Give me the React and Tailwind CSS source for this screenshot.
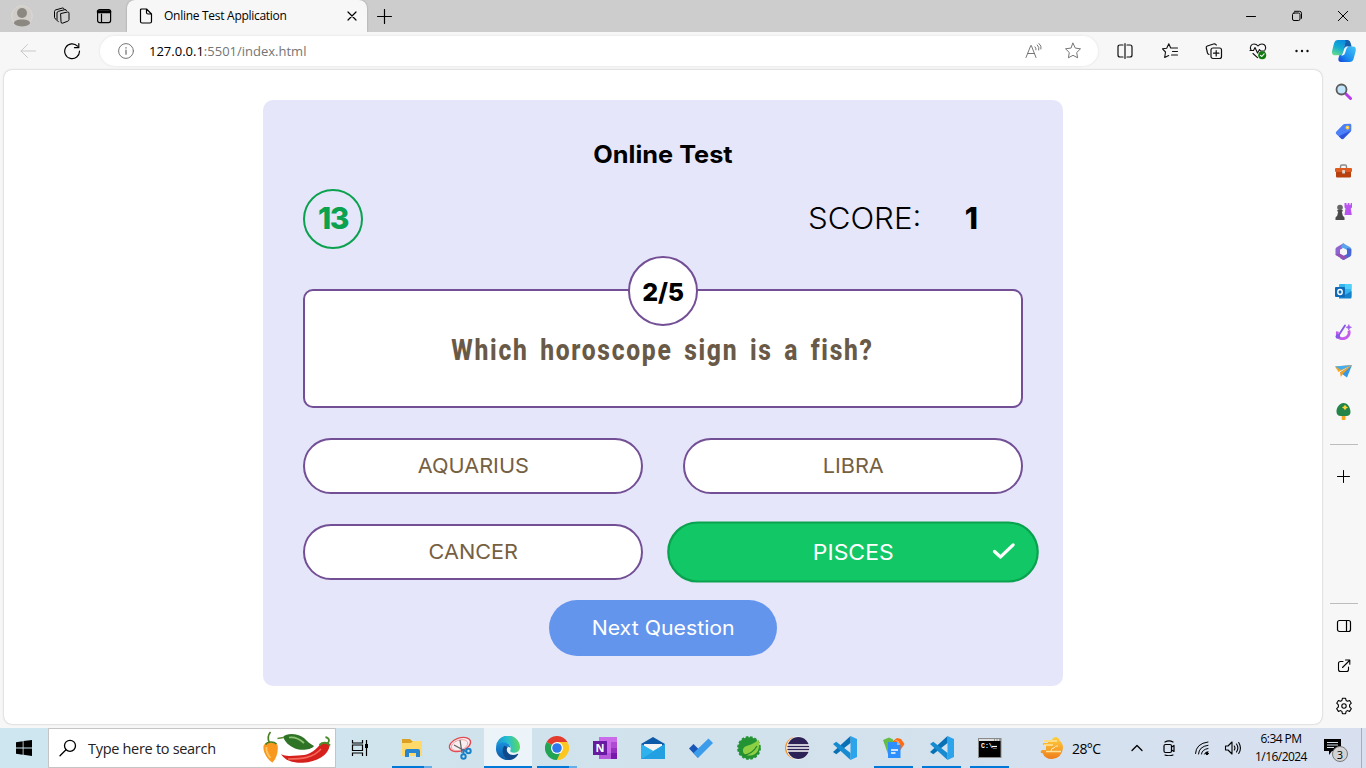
import React from "react";

const UI = "font-['Open_Sans','Noto_Sans',sans-serif]";

function Icon({ size = 24, box = 24, sw = 1, children, className = "" }) {
  return (
    <svg
      width={size}
      height={size}
      viewBox={`0 0 ${box} ${box}`}
      fill="none"
      stroke="currentColor"
      strokeWidth={sw}
      strokeLinecap="round"
      strokeLinejoin="round"
      className={`shrink-0 ${className}`}
    >
      {children}
    </svg>
  );
}

const STAR = "M10 2.500l2.300 4.900 5.200.7-3.800 3.700.9 5.300-4.600-2.500-4.600 2.500.9-5.300-3.800-3.700 5.200-.7z";

function TabStrip() {
  return (
    <div className="flex h-8 shrink-0 items-stretch bg-[#cdcdcd]">
      <div className="flex w-[127px] items-center pl-[11px]">
        <Icon size={22} box={22}>
          <circle cx="11" cy="11" r="10.3" fill="#d1cec9" stroke="#dcd9d4" />
          <g fill="#8b8781" stroke="none">
            <circle cx="11" cy="8" r="5" />
            <path d="M3 18.500c0-3 3-4 8-4s8 1 8 4c-2 2.300-5 3-8 3s-6-.7-8-3z" />
          </g>
        </Icon>
        <Icon size={18} box={18} className="ml-5">
          <path d="M8 6.500l6.500-1.500q1.500-.3 1.500 1.200v6.300q0 1.200-1.200 1.700l-5.300 2q-1.500.4-1.500-1.200zM5.300 14.500l-.8-.4q-.5-.3-.5-1.200V6q0-1.200 1.200-1.600L12 2.600q1.300-.2 1.500 1M3 12.300l-1-.7q-.5-.3-.5-1.200V4.500q0-1.200 1.200-1.600L9.500 1q1.200-.2 1.500.8" />
        </Icon>
        <Icon size={16} box={16} className="ml-[25px]" sw={1.2}>
          <rect x="1.600" y="1.600" width="13" height="13" rx="2" />
          <path d="M2 3.500h12M2 4h12" strokeWidth="2.500" />
          <path d="M5.500 6v8.500" />
        </Icon>
      </div>
      <div className="flex w-60 items-center rounded-t-lg bg-[#f7f7f7] pl-[13px] pr-[9px] shadow-[0_0_2px_rgba(0,0,0,0.3)]">
        <Icon size={16} box={16} sw={1.2} className="-ml-[2px]">
          <path d="M3.500 1h5l5 5v7.500q0 1.500-1.500 1.500H4q-1.500 0-1.500-1.500V2q0-1 1-1zM8.500 1v3.500Q8.500 6 10 6h3.500" />
        </Icon>
        <span className={`ml-[10px] text-[12px] tracking-[-0.28px] text-black ${UI}`}>Online Test Application</span>
        <Icon size={12} box={12} sw={1.2} className="ml-auto">
          <path d="M2 2l8 8M10 2l-8 8" />
        </Icon>
      </div>
      <div className="flex items-center pl-[10px]">
        <Icon size={15} box={14} sw={1.1}>
          <path d="M7 .5v13M.5 7h13" />
        </Icon>
      </div>
      <div className="ml-auto flex items-center text-black">
        <div className="flex w-[46px] justify-center">
          <Icon size={12} box={12}><path d="M1.500 6.500h9" /></Icon>
        </div>
        <div className="flex w-[46px] justify-center">
          <Icon size={12} box={12}>
            <rect x="1.500" y="3" width="7.500" height="7.500" rx="1.500" />
            <path d="M3.500 1.300h5q2 0 2 2v5" />
          </Icon>
        </div>
        <div className="flex w-[46px] justify-center">
          <Icon size={12} box={12}><path d="M1.300 1.300l9.400 9.400M10.700 1.300l-9.400 9.400" /></Icon>
        </div>
      </div>
    </div>
  );
}

function Copilot() {
  return (
    <svg width="26" height="26" viewBox="0 0 26 26">
      <defs>
        <linearGradient id="cpA" x1=".6" y1="0" x2=".2" y2="1">
          <stop offset="0" stopColor="#0b8de0" />
          <stop offset=".5" stopColor="#14aed0" />
          <stop offset="1" stopColor="#68dc8c" />
        </linearGradient>
        <linearGradient id="cpB" x1="1" y1="0" x2="0" y2="1">
          <stop offset="0" stopColor="#45c8f5" />
          <stop offset=".6" stopColor="#1a8df0" />
          <stop offset="1" stopColor="#1441d8" />
        </linearGradient>
      </defs>
      <path d="M10 24c-2-.2-3-1.500-2.600-3.500L10 11c.6-2 1.500-2.500 3-2.500h9c2.500 0 3.300 2 2.700 4.500l-2 7.500c-.6 2.400-2 3.500-4.200 3.500z" fill="url(#cpB)" />
      <path d="M7 2h10c-2 .6-2.500 2-3 4l-2 8c-.6 2.300-1.700 3.300-3.500 3.300H4C1.300 17.300.5 15 1.200 12.500L3 5.500C3.700 3 5 2 7 2z" fill="url(#cpA)" />
      <path d="M14 2h2.500c1.800 0 2.800 1.500 3.200 3.300l.9 3.200H16c-1.500 0-2.500.4-3.300 2l1.300-5c.5-2 .6-2.800 0-3.500z" fill="#135fae" />
      <path d="M13 11.500c.8-2.300 1.800-3 4.500-3-1.500.8-2 2-2.500 3.500l-1 3.200c-.6 1.800-1.700 2.300-4 2.300 1-.7 1.500-1.600 2-3z" fill="#f4fbff" />
    </svg>
  );
}

function Toolbar() {
  return (
    <div className="flex h-[38px] shrink-0 items-center bg-[#f7f7f7]">
      <div className="flex w-[100px] items-center pl-5">
        <Icon size={16} box={16} className="text-[#c9c9c9]"><path d="M15.500 8H1M7.500 1.500L1 8l6.500 6.500" /></Icon>
        <Icon size={18} box={18} sw={1.2} className="ml-[27px]">
          <path d="M14.500 4.200A7.400 7.400 0 1 0 16.500 9M15.800 1.500v4.200h-4.300" />
        </Icon>
      </div>
      <div className="flex h-[30px] w-[998px] items-center rounded-full bg-white pl-[18px] pr-4 shadow-[0_0_3px_rgba(0,0,0,0.09)]">
        <Icon size={16} box={16} className="text-[#767676]">
          <circle cx="8" cy="8" r="7.400" />
          <path d="M8 7.200v4M8 4.600v.4" strokeWidth="1.300" />
        </Icon>
        <span className={`ml-[15px] pt-px text-[13px] text-[#757575] ${UI}`}>
          <span className="text-black">127.0.0.1</span>:5501/index.html
        </span>
        <Icon size={17} box={17} className="ml-auto text-[#767676]">
          <path d="M1 14.500L5.800 2.500h.5L11 14.500M2.700 10.500h6.700M10 3.800q1.300 1.200 1 3M12.300 2q2.300 2.200 1.500 5M14 .5q3 2.500 2 5.500" />
        </Icon>
        <Icon size={18} box={18} sw={1} className="ml-[22px] text-[#767676]"><path transform="translate(-1 -1.300)" d={STAR} /></Icon>
      </div>
      <div className="flex w-[224px] items-center pl-[18px] text-[#111]">
        <Icon size={18} box={18} sw={1.2}>
          <path d="M7 3H4Q2 3 2 5v8q0 2 2 2h3M11 3h3q2 0 2 2v8q0 2-2 2h-3M9 1.500v15" />
        </Icon>
        <Icon size={18} box={18} sw={1.1} className="ml-[27px]">
          <path d="M9.700 6L7.800 1.800 5.700 6.200 1.500 6.800l3 3.200-.8 5.500 4-2M9.700 6h6.800M11.500 9.500h5M10.500 13h6" />
        </Icon>
        <Icon size={18} box={18} sw={1.2} className="ml-[26px]">
          <rect x="6" y="6" width="10.500" height="10.500" rx="2" />
          <path d="M11.200 8.500v5.400M8.500 11.200h5.400M4 12.500Q2.800 12 2.500 11L1.300 6q-.4-1.500 1-2L8.500 2q2-.6 2.800 1" />
        </Icon>
        <Icon size={18} box={18} sw={1.1} className="ml-[26px]">
          <path d="M2 8C.3 4.500 2.500 2 5 2q2.500 0 4 2 1.500-2 4-2c3 0 4.700 3 3 6M4 11.500l4.500 4.200M1 8.500h3.500l1.500-3 2.500 5.500 2-3.500 1 1.500h4" />
          <circle cx="13.200" cy="13.200" r="4" fill="#107c10" stroke="none" />
          <path d="M11.500 13.300l1.300 1.200 2.300-2.600" stroke="#fff" />
        </Icon>
        <Icon size={16} box={16} className="ml-[27px]">
          <g fill="currentColor" stroke="none">
            <circle cx="2.500" cy="8" r="1.200" /><circle cx="8" cy="8" r="1.200" /><circle cx="13.500" cy="8" r="1.200" />
          </g>
        </Icon>
      </div>
      <div className="ml-auto flex w-[44px] items-center justify-center"><Copilot /></div>
    </div>
  );
}

const sideIcons = [
  <g key="s">
    <path d="M11 11l4.500 4.500" stroke="#b83bea" strokeWidth="3" strokeLinecap="round" />
    <circle cx="6.500" cy="6.500" r="5" fill="#bfe4fb" stroke="#5c5c5c" strokeWidth="1.800" />
  </g>,
  <g key="t">
    <path d="M9.500 1l5.500-.2q1.300 0 1.300 1.200v5q0 1-.7 1.700l-7 7q-1.200 1-2.300 0L1.200 11q-1-1 0-2.200L8 1.800Q8.700 1 9.500 1z" fill="#4c80f7" />
    <path d="M16 7.500l-7.500 8q-1.200 1-2.300 0l-2.400-2.300z" fill="#2f55dc" />
    <circle cx="12.500" cy="4.500" r="1.400" fill="#fff" stroke="#f5c542" strokeWidth="1.200" />
  </g>,
  <g key="b">
    <path d="M5.500 5V3.500q0-1.500 1.500-1.500h3q1.500 0 1.500 1.500V5" fill="none" stroke="#888" strokeWidth="1.400" />
    <rect x="0" y="5" width="17" height="4" rx="1" fill="#df5b20" />
    <path d="M1 9h15v4.500q0 1-1 1H2q-1 0-1-1z" fill="#b8400f" />
    <rect x="7.200" y="7" width="2.800" height="3.500" rx=".6" fill="#d6d6d6" />
  </g>,
  <g key="c">
    <path d="M9.500 0h2v1.800h1.200V0h1.700v1.800h1.300V0h1.300v4.500l-1.200 1 1 6.500H9.500l1-6.500-1-1z" fill="#b954f0" />
    <circle cx="5" cy="4.500" r="2.800" fill="#666" />
    <path d="M2.300 7h5.400v1.400H6.800l1 4.300L9.500 14.500v2.500H.5v-2.500l1.700-1.800 1-4.300h-.9z" fill="#4a4a4a" />
  </g>,
  <g key="o">
    <path d="M8.500.2L2 3.900Q.5 4.700.5 6v6l4.500 2.600V7l6.500-4z" fill="#8e63d2" />
    <path d="M8 .2l6.900 3.900q1.400.8 1.400 2v4L12 7.500 5.800 4.300z" fill="#5ba5ec" />
    <path d="M16.300 6v5.500q0 1.200-1.100 1.900L8.500 17.200l-3.500-2.200 7-4V5z" fill="#4767d6" />
    <path d="M.5 11.500l8 5.500 4-3L9 12.600 5 10.500z" fill="#9552b4" />
    <path d="M8.400 5l3.200 1.800v3.700l-3.200 1.900-3.200-1.900V6.800z" fill="#f7f7f7" />
  </g>,
  <g key="u">
    <rect x="4" y="1" width="12.500" height="13" rx="1" fill="#35b5ed" />
    <path d="M10 1h6.500v5H10z" fill="#52d0fa" />
    <path d="M4 15.500V9l6 3 6.500-4v6.500q0 1-1 1z" fill="#1481cc" />
    <rect x="0" y="4" width="10" height="10" rx="1" fill="#0f68b8" />
    <ellipse cx="5" cy="9" rx="2.200" ry="2.500" fill="none" stroke="#fff" strokeWidth="1.400" />
  </g>,
  <g key="d">
    <path d="M2.500 8.500C1.500 13 4 16 8 15.700c5-.3 7-4.700 5.800-8.200" fill="none" stroke="#c45bea" strokeWidth="2.800" />
    <path d="M3.500 12.500l6.500-10" stroke="#8758e8" strokeWidth="1.900" strokeLinecap="round" />
    <circle cx="2.800" cy="13.500" r="2.300" fill="#8758e8" />
    <path d="M13.800 1.500l.8 2 2 .8-2 .8-.8 2-.8-2-2-.8 2-.8z" fill="#a45bea" stroke="#a45bea" strokeWidth=".6" />
  </g>,
  <g key="p">
    <path d="M0 3.500L17 2 3.500 9z" fill="#f6a51f" />
    <path d="M0 3.500L17 2 6 7z" fill="#45acf0" />
    <path d="M17 2l-5 12.500-7-5z" fill="#3199e8" />
    <path d="M17 2L5 9.500l.8 4.500 2-3z" fill="#f0a020" />
  </g>,
  <g key="tr">
    <rect x="6.700" y="11" width="3.800" height="6" rx="1" fill="#f5a623" />
    <path d="M8.500 0C4 0 1.200 5.500 1.500 9c.1 2.500 2 4 4 4h6c2.300 0 4-1.500 4-4C15.500 5 13 0 8.500 0z" fill="#23854a" />
    <path d="M10 1.700l1.200 1.700 1.900.8-1.900 1.200-1.200 1.900-1.200-1.900-1.900-1.200 1.900-.8z" fill="#ffd43b" />
  </g>,
];

function Sidebar() {
  return (
    <div className="flex w-[44px] shrink-0 flex-col items-center">
      <div className="flex flex-col items-center pt-px">
        {sideIcons.map((g, i) => (
          <div key={i} className="flex h-10 w-10 items-center justify-center pr-px">
            <svg width="17" height="17" viewBox="0 0 17 17">{g}</svg>
          </div>
        ))}
      </div>
      <div className="mt-[13px] h-px w-7 bg-[#bdbdbd]" />
      <Icon size={13} box={13} className="mr-px mt-[25px]"><path d="M6.500 .5v12M.5 6.500h12" /></Icon>
      <div className="mt-auto h-px w-7 bg-[#bdbdbd]" />
      <div className="flex h-[124px] flex-col items-center pt-[2px]">
        <div className="flex h-10 items-center">
          <Icon size={16} box={16} sw={1.200}>
            <rect x="1.500" y="2.500" width="13" height="11" rx="2" /><path d="M10.500 2.500v11" />
          </Icon>
        </div>
        <div className="flex h-10 items-center">
          <Icon size={16} box={16} sw={1.100}>
            <path d="M7 3.500H4.500Q2.500 3.500 2.500 5.500v6q0 2 2 2h6q2 0 2-2V9M6.500 9.500l7-7M9.500 2h4.300v4.300" />
          </Icon>
        </div>
        <div className="flex h-10 items-center">
          <Icon size={18} box={18} sw={1.100}>
            <path d="M7.400 1.300h3.200l.5 2.200 1.300.8 2.200-.8 1.700 2.700-1.700 1.700v2l1.700 1.800-1.700 2.700-2.200-.8-1.300.8-.5 2.300H7.400l-.5-2.300-1.300-.8-2.200.8-1.700-2.700 1.700-1.800v-2L1.700 6.200l1.700-2.700 2.200.8 1.300-.8z" />
            <circle cx="9" cy="9" r="2.200" />
          </Icon>
        </div>
      </div>
    </div>
  );
}

const MONT = "font-['Inter',sans-serif]";

function Option({ children }) {
  return (
    <div className="flex h-14 w-[340px] items-center justify-center rounded-full border-2 border-[#734f96] bg-white text-[20px] text-[#76603f]">
      <span className="scale-x-[1.083]">{children}</span>
    </div>
  );
}

function Quiz() {
  return (
    <div className={`flex h-[586px] w-[800px] flex-col rounded-[10px] bg-[#e6e6fa] px-10 ${MONT}`}>
      <h1 className="mt-10 scale-x-[1.055] text-center text-[24px] font-bold leading-[30px] text-black">Online Test</h1>
      <div className="mt-[19px] flex h-[60px] items-center">
        <div className="flex h-[60px] w-[60px] items-center justify-center rounded-full border-2 border-[#0aa14f] pb-px text-[30px] font-extrabold tracking-[-1.5px] text-[#0aa14f]">
          13
        </div>
        <span className="ml-[445px] origin-left scale-x-[1.04] pb-px text-[30px] font-light text-black">SCORE:</span>
        <span className="ml-auto mr-[45px] pb-px text-[30px] font-extrabold text-black">1</span>
      </div>
      <div className="relative mt-10 flex h-[119px] shrink-0 items-center justify-center rounded-[10px] border-2 border-[#734f96] bg-white">
        <div className="absolute -top-[35px] left-[323px] flex h-[70px] w-[70px] items-center justify-center rounded-full border-2 border-[#734f96] bg-white pt-[3px] text-[25px] font-extrabold tracking-[-0.3px] text-black">
          2/5
        </div>
        <h2 className="origin-center scale-x-[0.85] whitespace-nowrap pt-1 font-['Roboto',sans-serif] text-[29px] font-extrabold tracking-[2px] [word-spacing:4.5px] text-[#695a48]">
          Which horoscope sign is a fish?
        </h2>
      </div>
      <div className="mt-[30px] grid grid-cols-2 gap-x-10 gap-y-[30px]">
        <Option>AQUARIUS</Option>
        <Option>LIBRA</Option>
        <Option>CANCER</Option>
        <div className="relative flex h-14 w-[340px] scale-[1.093] items-center justify-center rounded-full border-2 border-[#0aa14f] bg-[#12c866] text-[20px] text-white">
          <span className="scale-x-[1.05]">PISCES</span>
          <svg className="absolute right-[19px] top-[17px]" width="22" height="16" viewBox="0 0 22 16" fill="none">
            <path d="M2.500 8.500l5.500 5L19.500 2.500" stroke="#fff" strokeWidth="3" strokeLinecap="round" strokeLinejoin="round" />
          </svg>
        </div>
      </div>
      <div className="mt-5 flex h-14 w-[228px] shrink-0 items-center justify-center self-center rounded-full bg-[#6495ed] text-[20px] text-white">
        <span className="scale-x-[1.065]">Next Question</span>
      </div>
    </div>
  );
}

function VsCode() {
  return (
    <svg width="24" height="24" viewBox="0 0 24 24">
      <path d="M17.500 0L24 3v18l-6.500 3z" fill="#2ba4ec" />
      <path d="M17.500 0v7L3.300 18.300 0 16z" fill="#0870b5" />
      <path d="M0 8l3.300-2.300L17.500 17v7z" fill="#168bd2" />
    </svg>
  );
}

const apps = [
  {
    bar: "split",
    icon: (
      <svg width="22" height="22" viewBox="0 0 22 22">
        <path d="M1 2h8l2 2h10v15H1z" fill="#dca023" />
        <path d="M1 6h9l2-2h9v15H1z" fill="#ffd96a" />
        <path d="M4 20v-6q0-2 2-2h11q2 0 2 2v6h-4v-4H8v4z" fill="#2786cf" />
      </svg>
    ),
  },
  {
    icon: (
      <svg width="24" height="24" viewBox="0 0 24 24" fill="none">
        <ellipse cx="12" cy="8.500" rx="11" ry="6.500" transform="rotate(-20 12 8.500)" fill="#f8eef0" stroke="#e04a50" strokeWidth="1.300" />
        <ellipse cx="11.500" cy="9" rx="8.500" ry="5" transform="rotate(-20 12 9)" stroke="#ee9a9c" strokeWidth=".8" />
        <path d="M6 9l11 6M12 4l2 13" stroke="#666" strokeWidth="1.300" />
        <circle cx="20.500" cy="15" r="2.200" stroke="#1681c8" strokeWidth="2" />
        <circle cx="15.500" cy="20.500" r="2.200" stroke="#1681c8" strokeWidth="2" />
        <path d="M18.500 15.500l-4-2M15.500 18.500V14" stroke="#1681c8" strokeWidth="1.800" />
      </svg>
    ),
  },
  {
    active: true,
    icon: (
      <svg width="24" height="24" viewBox="0 0 24 24">
        <defs>
          <linearGradient id="edT" x1="0" y1=".4" x2="1" y2=".3">
            <stop offset="0" stopColor="#1793d8" /><stop offset=".5" stopColor="#26bfcf" /><stop offset="1" stopColor="#61db55" />
          </linearGradient>
          <linearGradient id="edM" x1="0" y1="0" x2="0" y2="1">
            <stop offset="0" stopColor="#1a8fdc" /><stop offset="1" stopColor="#0c59a4" />
          </linearGradient>
        </defs>
        <path d="M0 12A12 12 0 0 1 24 11c.2 3-2 5.500-5.500 5.700-2.500.1-4.500-.5-4.200-2 1.400-3 0-7.700-5.300-7.700C4 7 .5 9 0 12z" fill="url(#edT)" />
        <path d="M0 12c.3-3.500 4-5.700 8-5.400 4.500.2 6.700 3 6.500 6-.5-1.300-2-2.200-3.500-1.600-4 1.500-2.500 7 1.800 8.600 3.200 1.200 6.700.5 9-1.500C19.500 22 16 24 12 24 5 24-.5 18.500 0 12z" fill="url(#edM)" />
        <path d="M8.500 9.800c-3.500 4-2 11.500 5 14.100 4-.4 7-2.500 8.600-5.500.2-.6-.3-.8-.8-.5-5 2.600-10 .2-10.500-4-.1-1 .2-1.800 1-2.600z" fill="#114a8b" />
      </svg>
    ),
  },
  {
    bar: "split",
    icon: (
      <svg width="24" height="24" viewBox="0 0 24 24">
        <path d="M12 12L1.600 6A12 12 0 0 1 22.400 6z" fill="#e33b2e" />
        <path d="M12 12L1.600 6A12 12 0 0 0 12 24l5.200-9z" fill="#23a455" />
        <path d="M12 12h5.200L12 24A12 12 0 0 0 22.400 6H12z" fill="#fdc721" />
        <circle cx="12" cy="12" r="6" fill="#fff" />
        <circle cx="12" cy="12" r="4.800" fill="#2e78ed" />
      </svg>
    ),
  },
  {
    icon: (
      <svg width="24" height="24" viewBox="0 0 24 24">
        <path d="M6 1h18v22H6z" fill="#ca6be9" />
        <path d="M18 6h6v6h-6z" fill="#ae4bd5" /><path d="M18 12h6v5h-6z" fill="#9332bf" /><path d="M6 17h12v6H6z" fill="#b65bdc" /><path d="M18 17h6v6h-6z" fill="#7719aa" />
        <rect y="5" width="14" height="14" fill="#681ba0" />
        <text x="7" y="16" textAnchor="middle" fontSize="11" fontWeight="700" fontFamily="Open Sans" fill="#fff">N</text>
      </svg>
    ),
  },
  {
    icon: (
      <svg width="24" height="24" viewBox="0 0 24 24">
        <path d="M0 8l12-7 12 7v15H0z" fill="#0c5aa8" />
        <path d="M3 8h18v9H3z" fill="#f4f4f4" />
        <path d="M0 8l12 7L24 8v15H0z" fill="#35bdf2" />
        <path d="M0 8l12 7L0 23z" fill="#2eb2ee" /><path d="M0 23L24 8v15z" fill="#22a0e2" />
      </svg>
    ),
  },
  {
    icon: (
      <svg width="24" height="24" viewBox="0 0 24 24">
        <path d="M0 12.500L4.500 8l5 5-.5 9z" fill="#1857b8" />
        <path d="M9 22l-4.500-5L19.500 2.500 24 7z" fill="#3b9cec" />
      </svg>
    ),
  },
  {
    icon: (
      <svg width="24" height="24" viewBox="0 0 24 24">
        <circle cx="12" cy="12" r="10.800" fill="#249334" stroke="#249334" strokeWidth="2.200" strokeDasharray="2.600 1.700" />
        <path d="M21.500 3.500c2 9-1 16-9 16-4 0-7-2-6.500-6 1-5 9-3 15.500-10z" fill="#8ed043" />
        <path d="M6 19.500c6-1 11-4 14-9.500" fill="none" stroke="#23882e" strokeWidth="1.200" />
      </svg>
    ),
  },
  {
    icon: (
      <svg width="26" height="24" viewBox="0 0 26 24">
        <circle cx="12" cy="12" r="11" fill="#f5942a" />
        <circle cx="14" cy="12" r="11.500" fill="#fff" /><circle cx="14.300" cy="12" r="11" fill="#2c2255" />
        <path d="M3 9h22M2.500 12h23M3 15h22" stroke="#fff" strokeWidth="1.400" />
      </svg>
    ),
  },
  { icon: <VsCode /> },
  {
    bar: "full",
    icon: (
      <svg width="22" height="22" viewBox="0 0 22 22">
        <path d="M0 3l6-2.500 4 2V17H5z" fill="#65bd45" />
        <path d="M10 4l4-3 4 1 3.500 5L16 15h-6z" fill="#ff6b13" />
        <path d="M12.500 3.500q4 0 4 4" fill="none" stroke="#ffb387" />
        <path d="M5 5h9l3.500 3v13H5z" fill="#2c8ffb" /><path d="M14 5v3h3.500z" fill="#8bc2ff" />
        <path d="M8 13h7M8 16h4.500" stroke="#fff" strokeWidth="1.400" />
      </svg>
    ),
  },
  { bar: "full", icon: <VsCode /> },
  {
    bar: "full",
    icon: (
      <svg width="24" height="20" viewBox="0 0 24 20">
        <rect x=".5" y=".5" width="22.500" height="19" fill="#000" stroke="#8a8a8a" />
        <path d="M1 1h21.500v2H1z" fill="#ddd" />
        <path d="M16 2h1M18.500 2h1M21 2h1" stroke="#555" />
        <text x="3" y="10" fontSize="6.500" fontWeight="700" fontFamily="Liberation Mono" fill="#fff">C:\_</text>
        <path d="M14 8.500h5" stroke="#fff" strokeWidth="1.200" />
      </svg>
    ),
  },
];

function AppCell({ app }) {
  return (
    <div className={`flex h-10 w-[48.170px] shrink-0 flex-col items-center ${app.active ? "bg-[#ecf4f9]" : ""}`}>
      <div className="flex h-[38px] items-center pt-0.5">{app.icon}</div>
      {app.active && <div className="h-0.5 w-full bg-[#0078d7]" />}
      {app.bar === "full" && <div className="h-0.5 w-[39px] bg-[#0078d7]" />}
      {app.bar === "split" && (
        <div className="flex h-0.5 w-10">
          <div className="w-8 bg-[#0078d7]" />
          <div className="w-2 bg-[#66aee7]" />
        </div>
      )}
    </div>
  );
}

function Peppers() {
  return (
    <svg width="70" height="34" viewBox="0 0 70 34">
      <path d="M.5 15c1-4 10-5.500 14-1 1 6-.5 13-5 17.500C6 30-.5 22 .5 15z" fill="#f8981f" />
      <path d="M3.500 16c-.5 4 1.500 8 4 11" stroke="#ffc564" strokeWidth="1.800" fill="none" />
      <path d="M6.500 12C4.500 8 5 4 7.500 1M2.500 13.500c2-3 8-3.500 11-.5" stroke="#477e22" strokeWidth="1.700" fill="none" />
      <path d="M14.500 7.500l6-1" stroke="#5b8b35" strokeWidth="1.500" />
      <path d="M20 6C25 1 35 3 41 7c3 3 6 6 10 8-3 4-13 5-19 2.500C26 15 22 11 20 6z" fill="#2f7426" />
      <path d="M26 6.500c6-1 10 1 15 5.500" stroke="#8bc573" strokeWidth="1.700" fill="none" />
      <path d="M57 13.500c4-4 10-2 9.500 2C65 24 54 31 40 31.800 31 32.200 22 30 18 23c5 3 11 1.500 17 1.500 9 0 16-3 22-11z" fill="#d6201c" />
      <path d="M25 28c14 0 25-1 33-10" stroke="#f4695c" strokeWidth="1.600" fill="none" />
      <path d="M56.500 14c3-3 8-3 10.500.5M65 12c2-2.500 1-5-2.500-6" stroke="#4b8b2b" strokeWidth="1.900" fill="none" />
    </svg>
  );
}

function Taskbar() {
  return (
    <div className={`flex h-10 shrink-0 bg-linear-to-r from-[#cde6ef] via-[#d1e2ec] to-[#d8e0f0] text-black ${UI}`}>
      <div className="flex w-12 items-center justify-center">
        <svg width="16" height="16" viewBox="0 0 16 16">
          <path d="M0 2.200L6.700 1.200v6.300H0zM7.500 1.100L16 0v7.500H7.500zM0 8.400h6.700v6.400L0 13.800zM7.500 8.400H16V16l-8.500-1.200z" />
        </svg>
      </div>
      <div className="flex w-72 shrink-0 items-center border border-[#c5c5c5] bg-white pl-[10px]">
        <Icon size={18} box={18} sw={1.300}>
          <circle cx="11" cy="6.800" r="5.500" /><path d="M7 10.800L1 16.800" />
        </Icon>
        <span className="ml-[11px] whitespace-nowrap pt-px text-[14.500px] tracking-[-0.3px] text-[#222]">Type here to search</span>
        <div className="ml-auto mr-[2px]"><Peppers /></div>
      </div>
      <div className="flex w-[52px] shrink-0 items-center justify-center pr-1">
        <svg width="18" height="18" viewBox="0 0 18 18" fill="none" stroke="#000" strokeWidth="1.200">
          <path d="M1.500 1v3h10V1M1.500 17v-3h10v3M1.500 6h10v5.500h-10zM15.500 1v16" /><path d="M14 5h3v4h-3z" fill="#000" stroke="none" />
        </svg>
      </div>
      {apps.map((a, i) => <AppCell key={i} app={a} />)}
      <div className="ml-auto flex w-[326px] items-center">
        <svg width="24" height="22" viewBox="0 0 24 22">
          <defs><linearGradient id="sun" x1="0" y1="0" x2="0" y2="1"><stop stopColor="#ffd13d" /><stop offset="1" stopColor="#ef7c1a" /></linearGradient></defs>
          <path d="M4 3h8q1-3 4-3 3 .5 3.500 3.500Q23 6 23 11 22 21 12 22q-7 0-9.500-6H1q-1-2 1-3h4V8H3V6h5V5H4z" fill="url(#sun)" />
          <path d="M3 4h14M4 8h9M6 14.500h15" stroke="#ffe49b" strokeWidth="1.300" fill="none" />
          <path d="M11 14q0-3 3-3 1-2.500 4-2" stroke="#ffe9b5" strokeWidth="1" fill="none" />
        </svg>
        <span className="ml-2 w-[38px] whitespace-nowrap text-[14px] tracking-[-0.6px]">28°C</span>
        <Icon size={12} box={12} sw={1.300} className="ml-[21px]"><path d="M1 8.500l5-5 5 5" /></Icon>
        <Icon size={16} box={16} sw={1.200} className="ml-[18px]">
          <rect x="3" y="4.500" width="7.500" height="8" rx="1.500" /><path d="M10.500 7l2.500-1.500v6L10.500 10M4 2q4-2.300 8 0M4 15q4 1.500 8 0" />
        </Icon>
        <Icon size={16} box={16} sw={1} className="ml-[17px]">
          <path d="M1.500 13.500Q2 3.500 14 2M4.500 14Q5 6.500 14 5.300M7.500 14Q8 9.500 14 8.500M10.500 14Q11 12 14 11.700" /><circle cx="13" cy="13.500" r="1.200" fill="#000" />
        </Icon>
        <Icon size={18} box={18} sw={1.100} className="ml-[14px]">
          <path d="M1.500 7H4l4-4v12l-4-4H1.500zM10.300 7q1.300 2 0 4M12.500 5q2.700 4 0 8M14.700 3.500q3.500 5.500 0 11" />
        </Icon>
        <div className="ml-[10px] flex w-[58px] flex-col items-center whitespace-nowrap text-[12px] leading-[18px] tracking-[-0.55px]">
          <span>6:34 PM</span><span>1/16/2024</span>
        </div>
        <div className="relative ml-[15px] h-[18px] w-6 shrink-0">
          <svg className="absolute -left-px top-0" width="17" height="16" viewBox="0 0 17 16">
            <path d="M0 0h17v12H8l-3 4v-4H0z" /><path d="M3 3.500h11M3 6h11M3 8.500h7" stroke="#d6dfec" />
          </svg>
          <span className="absolute left-[7px] top-[7px] flex h-4 w-4 items-center justify-center rounded-full border border-[#777] bg-[#d3d3d5] text-[11px] leading-none">3</span>
        </div>
        <div className="ml-auto h-full w-[5px] border-l border-[#9fb0bf]" />
      </div>
    </div>
  );
}

export default function App() {
  return (
    <div className="flex h-screen w-full flex-col overflow-hidden bg-[#f7f7f7]">
      <TabStrip />
      <Toolbar />
      <div className="flex h-[658px] shrink-0">
        <main className="mb-1 ml-1 flex w-[1318px] shrink-0 justify-center rounded-lg bg-white pt-[30px] shadow-[0_0_2px_rgba(0,0,0,0.3)]">
          <Quiz />
        </main>
        <Sidebar />
      </div>
      <Taskbar />
    </div>
  );
}
